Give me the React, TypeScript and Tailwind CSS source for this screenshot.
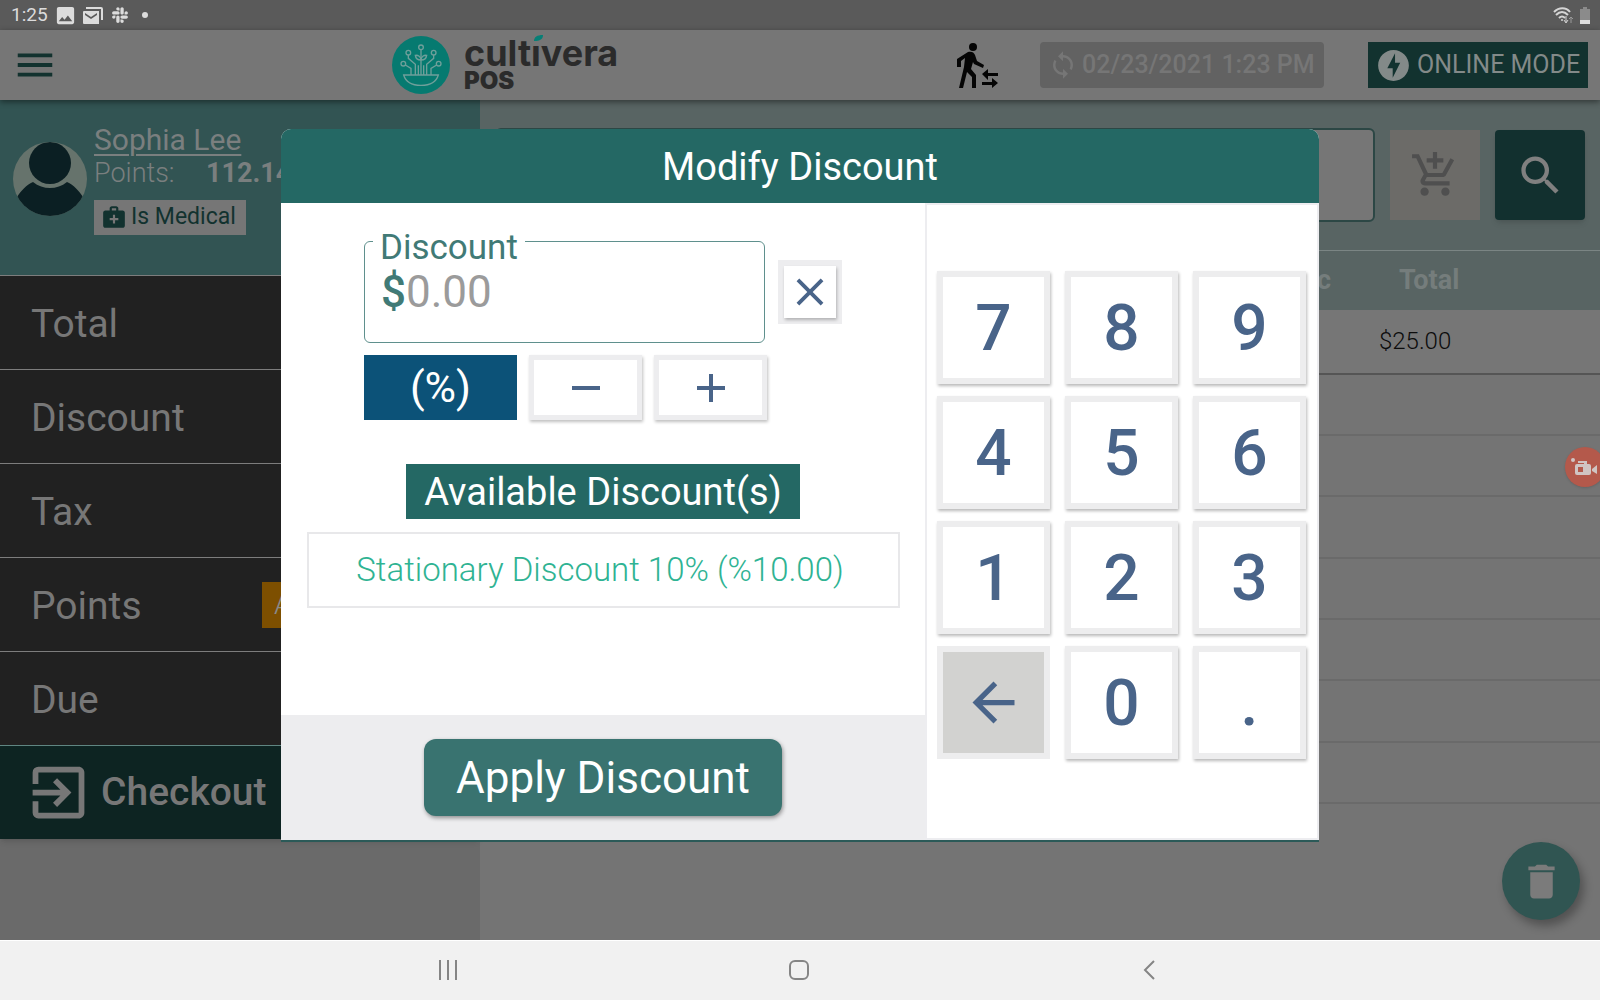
import React, { useState } from 'react';
import {
  MdAdd,
  MdAddShoppingCart,
  MdArrowBack,
  MdClose,
  MdDelete,
  MdExitToApp,
  MdImage,
  MdMedicalServices,
  MdMenu,
  MdOfflineBolt,
  MdRemove,
  MdSearch,
  MdSync,
} from 'react-icons/md';
import { FaSlack } from 'react-icons/fa';

const summaryRows = ['Total', 'Discount', 'Tax', 'Points', 'Due'];

const keys = ['7', '8', '9', '4', '5', '6', '1', '2', '3', 'back', '0', '.'];

export default function App() {
  return (
    <div className="flex min-h-screen flex-col bg-[#747474] font-['Roboto',sans-serif]">
      <StatusBar />
      <Header />
      <main className="relative flex flex-1">
        <Sidebar />
        <Cart />
        <button
          aria-label="Record"
          className="absolute top-[347px] -right-[5px] flex h-10 w-10 items-center justify-center rounded-full bg-[#b4594b] shadow"
        >
          <RecordIcon />
        </button>
        <button
          aria-label="Clear cart"
          className="absolute right-5 bottom-5 flex h-[78px] w-[78px] items-center justify-center rounded-full bg-[#305552] text-[#7b7b7b] shadow-[4px_6px_10px_rgba(0,0,0,0.3)]"
        >
          <MdDelete className="h-[45px] w-[45px]" />
        </button>
        <div className="absolute inset-x-0 top-[29px] flex justify-center">
          <DiscountModal />
        </div>
      </main>
      <NavBar />
    </div>
  );
}

function StatusBar() {
  return (
    <div className="flex h-[30px] items-center justify-between bg-[#5a5a5a] pr-[10px] pl-[11px] text-[#dcdcdc]">
      <div className="flex items-center">
        <span className="w-[43px] pt-px text-[19px]">1:25</span>
        <MdImage className="h-[23px] w-[23px]" />
        <MailIcon />
        <FaSlack className="ml-2 h-[18px] w-[18px]" />
        <span className="ml-[13px] h-[6px] w-[6px] rounded-full bg-[#dcdcdc]" />
      </div>
      <div className="flex items-center gap-[7px]">
        <WifiIcon />
        <svg viewBox="0 0 10 17" className="h-[17px] w-[10px]">
          <path d="M3 0h4v2h3v15H0V2h3z" fill="#8b8b8b" />
          <path d="M0 13h10v4H0z" fill="#dedede" />
        </svg>
      </div>
    </div>
  );
}

function Header() {
  return (
    <header className="z-10 flex h-[70px] items-center bg-[#767676] pr-3 pl-3 shadow-[0_2px_6px_rgba(0,0,0,0.45)]">
      <button aria-label="Menu" className="text-[#13322f]">
        <MdMenu className="h-[46px] w-[46px]" />
      </button>
      <div className="ml-[334px] flex items-center">
        <LogoMark />
        <div className="ml-[14px] text-[#2b2b2b]">
          <div className="relative font-['Inter',sans-serif] text-[36px] leading-8 font-bold" aria-label="cultivera">
            cultıvera
            <svg viewBox="0 0 9 6" className="absolute -top-[2px] left-[70px] h-[6px] w-[9px]">
              <path d="M0 6C0 2 3 0 9 0 9 4 6 6 0 6Z" fill="#077f76" />
            </svg>
          </div>
          <div className="font-['Inter',sans-serif] text-[24px] leading-6 font-black">POS</div>
        </div>
      </div>
      <button aria-label="Switch customer" className="ml-auto">
        <WalkIcon />
      </button>
      <button className="ml-10 flex h-[46px] w-[284px] items-center rounded-sm bg-[#626262] pl-2 text-[25px] font-medium whitespace-nowrap text-[#767676]">
        <MdSync className="mr-1 h-[30px] w-[30px] shrink-0" />
        02/23/2021 1:23 PM
      </button>
      <button className="ml-11 flex h-[46px] w-[220px] items-center bg-[#12322f] pl-[7px] text-[25px] whitespace-nowrap text-[#838a89]">
        <MdOfflineBolt className="mr-[5px] h-[37px] w-[37px] shrink-0" />
        ONLINE MODE
      </button>
    </header>
  );
}

function Sidebar() {
  return (
    <aside className="w-[480px] shrink-0 bg-[#6a6a6a]">
      <section className="flex h-[175px] bg-[#325453] pt-6 pl-3 text-[#7a7f7f]">
        <Avatar />
        <div className="ml-[6px]">
          <a href="#customer" className="block text-[30px] leading-[31px] underline decoration-2 underline-offset-4">
            Sophia Lee
          </a>
          <p className="flex text-[27px] leading-9 font-light">
            <span className="w-28">Points:</span>
            <strong className="font-bold">112.14</strong>
          </p>
          <span className="mt-[9px] flex h-[35px] w-[152px] items-center bg-[#767676] pl-[7px] text-[23px] whitespace-nowrap text-[#12322f]">
            <MdMedicalServices className="mr-1 mb-[2px] h-[26px] w-[26px]" />
            Is Medical
          </span>
        </div>
      </section>
      <section className="shadow-md">
        {summaryRows.map((row) => (
          <div
            key={row}
            className="flex h-[94px] items-center border-t border-[#7d7d7d] bg-[#212121] pt-1 pl-[31px] text-[39px] text-[#777777]"
          >
            {row}
            {row === 'Points' && (
              <span className="mb-1 ml-auto flex h-[46px] w-[218px] items-center bg-[#7d4f00] pl-3 text-[28px] font-light text-[#8a8a8a]">
                Apply Points
              </span>
            )}
          </div>
        ))}
        <button className="flex h-[94px] w-full items-center border-t border-[#5f8682] bg-[#0d2422] pl-6 text-[39px] font-medium text-[#777777]">
          <MdExitToApp className="mr-2 h-[69px] w-[69px]" />
          Checkout
        </button>
      </section>
    </aside>
  );
}

function Cart() {
  return (
    <section className="min-w-0 flex-1">
      <div className="flex h-[150px] gap-[15px] bg-[#586463] pt-7 pr-[15px] pl-[15px]">
        <input
          aria-label="Search products"
          className="h-[94px] min-w-0 flex-1 rounded-md border-2 border-[#2c4745] bg-[#767676]"
        />
        <button aria-label="Add to cart" className="mt-[2px] flex h-[90px] w-[90px] items-center justify-center bg-[#6c6b68] text-[#4f4f4f]">
          <MdAddShoppingCart className="h-[50px] w-[50px]" />
        </button>
        <button
          aria-label="Search"
          className="mt-[2px] flex h-[90px] w-[90px] items-center justify-center rounded-sm bg-[#12302f] text-[#808080] shadow-md"
        >
          <MdSearch className="h-[51px] w-[51px]" />
        </button>
      </div>
      <table className="h-[554px] w-full table-fixed border-collapse">
        <thead>
          <tr className="h-[59px] border-t border-[#7b8584] bg-[#586463] text-[27px] text-[#757d7c]">
            <th className="w-[43%] font-bold">Product</th>
            <th className="w-[16%] font-bold">Qty</th>
            <th className="text-right font-bold">Disc</th>
            <th className="w-[24%] pr-[73px] font-bold">Total</th>
          </tr>
        </thead>
        <tbody>
          <tr className="h-[64px] border-b-2 border-[#555555] bg-[#767676] text-[24px] font-light text-[#0c0c0c]">
            <td />
            <td />
            <td />
            <td className="pr-[101px] text-center">$25.00</td>
          </tr>
          {[1, 2, 3, 4, 5, 6, 7].map((n) => (
            <tr key={n} className="h-[61px] border-b-2 border-[#6a6a6a]">
              <td colSpan={4} />
            </tr>
          ))}
        </tbody>
      </table>
    </section>
  );
}

function DiscountModal() {
  const [amount, setAmount] = useState('');

  const press = (key: string) => {
    setAmount(key === 'back' ? amount.slice(0, -1) : amount + key);
  };

  return (
    <div
      role="dialog"
      aria-labelledby="modal-title"
      className="flex w-[1038px] flex-col overflow-hidden rounded-t-[10px] border-b-2 border-[#2b5a58] bg-white"
    >
      <h1 id="modal-title" className="flex h-[74px] items-center justify-center bg-[#246864] pt-[2px] text-[38px] text-white">
        Modify Discount
      </h1>
      <div className="flex h-[637px]">
        <div className="flex flex-1 flex-col">
          <div className="flex flex-1 flex-col items-center pt-[38px]">
            <div>
              <div className="flex items-center">
                <div className="relative flex h-[102px] w-[401px] items-center rounded-md border border-[#5f908d] pl-4 text-[44px]">
                  <label htmlFor="discount" className="absolute -top-[14px] left-2 bg-white px-[7px] text-[35px] leading-10 text-[#417a76]">
                    Discount
                  </label>
                  <span className="font-medium text-[#417a76]">$</span>
                  <input
                    id="discount"
                    value={amount}
                    onChange={(e) => setAmount(e.target.value)}
                    placeholder="0.00"
                    className="w-full min-w-0 bg-transparent text-[#417a76] outline-none placeholder:text-[#9b9b9b]"
                  />
                </div>
                <button
                  aria-label="Clear discount"
                  onClick={() => setAmount('')}
                  className="ml-[13px] flex h-16 w-16 items-center justify-center bg-[#ededef]"
                >
                  <span className="flex h-[52px] w-[52px] items-center justify-center bg-white text-[#496489] shadow-[1px_2px_3px_rgba(0,0,0,0.25)]">
                    <MdClose className="h-[46px] w-[46px]" />
                  </span>
                </button>
              </div>
              <div className="mt-3 flex gap-3">
                <button className="h-[65px] w-[153px] bg-[#0c5278] text-[43px] leading-[65px] text-white">(%)</button>
                <button
                  aria-label="Decrease"
                  className="flex h-[65px] w-[113px] items-center justify-center border-[5px] border-[#ededef] text-[#496489] shadow-[1px_2px_3px_rgba(0,0,0,0.25)]"
                >
                  <MdRemove className="h-12 w-12" />
                </button>
                <button
                  aria-label="Increase"
                  className="flex h-[65px] w-[113px] items-center justify-center border-[5px] border-[#ededef] text-[#496489] shadow-[1px_2px_3px_rgba(0,0,0,0.25)]"
                >
                  <MdAdd className="h-12 w-12" />
                </button>
              </div>
            </div>
            <h2 className="mt-11 h-[55px] bg-[#246864] px-[18px] text-[38px] leading-[56px] text-white">Available Discount(s)</h2>
            <button className="mt-[13px] h-[76px] w-[593px] border-2 border-[#e8e8ea] pr-[6px] text-[33px] font-light text-[#2fb393]">
              Stationary Discount 10% (%10.00)
            </button>
          </div>
          <div className="flex h-[125px] items-center justify-center bg-[#ededef]">
            <button className="h-[77px] w-[358px] rounded-xl bg-[#397370] text-[44px] text-white shadow-[1px_2px_4px_rgba(0,0,0,0.4)]">
              Apply Discount
            </button>
          </div>
        </div>
        <div className="grid w-[394px] grid-cols-3 content-start gap-x-[15px] gap-y-3 border-2 border-[#ededf0] pt-[66px] pr-[11px] pl-[10px]">
          {keys.map((key) => (
            <Key key={key} value={key} onPress={press} />
          ))}
        </div>
      </div>
    </div>
  );
}

function Key({ value, onPress }: { value: string; onPress: (key: string) => void }) {
  if (value === 'back') {
    return (
      <button
        aria-label="Backspace"
        onClick={() => onPress(value)}
        className="flex h-[113px] items-center justify-center border-[6px] border-[#ededee] bg-[#d2d2d0] text-[#496489]"
      >
        <MdArrowBack className="h-[63px] w-[63px]" />
      </button>
    );
  }

  return (
    <button
      onClick={() => onPress(value)}
      className="h-[113px] border-[6px] border-[#ededee] bg-white pt-[2px] text-[64px] leading-none font-medium text-[#496489] shadow-[1px_2px_3px_rgba(0,0,0,0.28)]"
    >
      {value}
    </button>
  );
}

function NavBar() {
  return (
    <nav className="flex h-[60px] items-center justify-between border-t border-white bg-[#f1f1f1] pr-[440px] pb-[2px] pl-[438px] text-[#858585]">
      <button aria-label="Recent apps">
        <svg viewBox="0 0 20 20" className="h-5 w-5" fill="none" stroke="currentColor" strokeWidth="2">
          <path d="M2 0v20M10 0v20M18 0v20" />
        </svg>
      </button>
      <button aria-label="Home">
        <svg viewBox="0 0 22 20" className="h-5 w-[22px]" fill="none" stroke="currentColor" strokeWidth="2">
          <rect x="2" y="1" width="18" height="18" rx="5" />
        </svg>
      </button>
      <button aria-label="Back">
        <svg viewBox="0 0 20 20" className="h-5 w-5" fill="none" stroke="currentColor" strokeWidth="2">
          <path d="M14 1L5 10l9 9" />
        </svg>
      </button>
    </nav>
  );
}

function LogoMark() {
  return (
    <svg viewBox="0 0 174 174" className="h-[58px] w-[58px]">
      <circle cx="87" cy="87" r="87" fill="#067a70" />
      <g fill="none" stroke="#6f9f9a" strokeWidth="4">
        <circle cx="87" cy="34" r="7" />
        <circle cx="49" cy="50" r="7" />
        <circle cx="125" cy="50" r="7" />
        <circle cx="34" cy="83" r="7" />
        <circle cx="140" cy="83" r="7" />
        <path d="M87 41v76M49 57v10l21 18v32M125 57v10l-21 18v32M40 87l17 10v20M134 87l-17 10v20M79 117V88M95 117V88" />
        <path d="M87 72c-10 0-16-5-17-14 9-1 16 4 17 14ZM87 72c10 0 16-5 17-14-9-1-16 4-17 14Z" />
        <path d="M35 117h104c-6 21-27 31-52 31s-46-10-52-31Z" />
      </g>
    </svg>
  );
}

function Avatar() {
  return (
    <svg viewBox="0 0 76 76" className="mt-[17px] h-[76px] w-[76px]">
      <clipPath id="avatar-clip">
        <circle cx="38" cy="38" r="37" />
      </clipPath>
      <circle cx="38" cy="38" r="37" fill="#66736c" />
      <g clipPath="url(#avatar-clip)" fill="#0b1f23">
        <circle cx="38" cy="22" r="21" />
        <path d="M5 56C9 50 14 44 21 41c10 8 24 8 34 0 7 3 12 9 16 15v20H5Z" />
      </g>
    </svg>
  );
}

function WalkIcon() {
  return (
    <svg viewBox="0 0 44 46" className="h-[46px] w-[44px]" fill="#050505">
      <circle cx="17" cy="5" r="4" />
      <path d="M12 10c3-1 6 0 7 3l2 6 7 4-1 3-9-4-1-2-2 7 5 6v13h-4V35l-5-5-4 16H3l5-21 1-9-4 3v6H1v-8Z" />
      <path d="M26 32l6-5v4h10v3H32v4ZM42 41l-6-5v4H26v3h10v3Z" />
    </svg>
  );
}

function MailIcon() {
  return (
    <svg viewBox="0 0 20 17" className="ml-[6px] h-[17px] w-5" fill="currentColor">
      <path d="M3 0h15a2 2 0 0 1 2 2v11h-2V2H3Z" />
      <path fillRule="evenodd" d="M1 4h15v13H1a1 1 0 0 1-1-1V5a1 1 0 0 1 1-1ZM2 6v2l6 4 6-4V6L8 10Z" />
    </svg>
  );
}

function WifiIcon() {
  return (
    <svg viewBox="0 0 20 17" className="h-[17px] w-5" fill="none" stroke="#d5d5d5" strokeWidth="2">
      <path d="M1 5c5-5 12-5 16 0M3 8c4-4 8-4 12 0M6 11c2-2 4-2 6 0" />
      <circle cx="9" cy="13" r="1" fill="#d5d5d5" stroke="none" />
      <path d="M13 9v6M11 13l2 3 2-3" strokeWidth="1" />
      <path d="M18 16v-6M16 12l2-2 2 2" stroke="#999999" strokeWidth="1" />
    </svg>
  );
}

function RecordIcon() {
  return (
    <svg viewBox="0 0 28 20" className="h-5 w-7" fill="#d0c5c3">
      <circle cx="2" cy="3" r="2" />
      <path fillRule="evenodd" d="M7 4h9v3h2a2 2 0 0 1 2 2v7a2 2 0 0 1-2 2H6a2 2 0 0 1-2-2v-7a2 2 0 0 1 2-2h7V6H7ZM7 10v5h5v-5Z" />
      <path d="M21 12l5-4v9l-5-3Z" />
    </svg>
  );
}
